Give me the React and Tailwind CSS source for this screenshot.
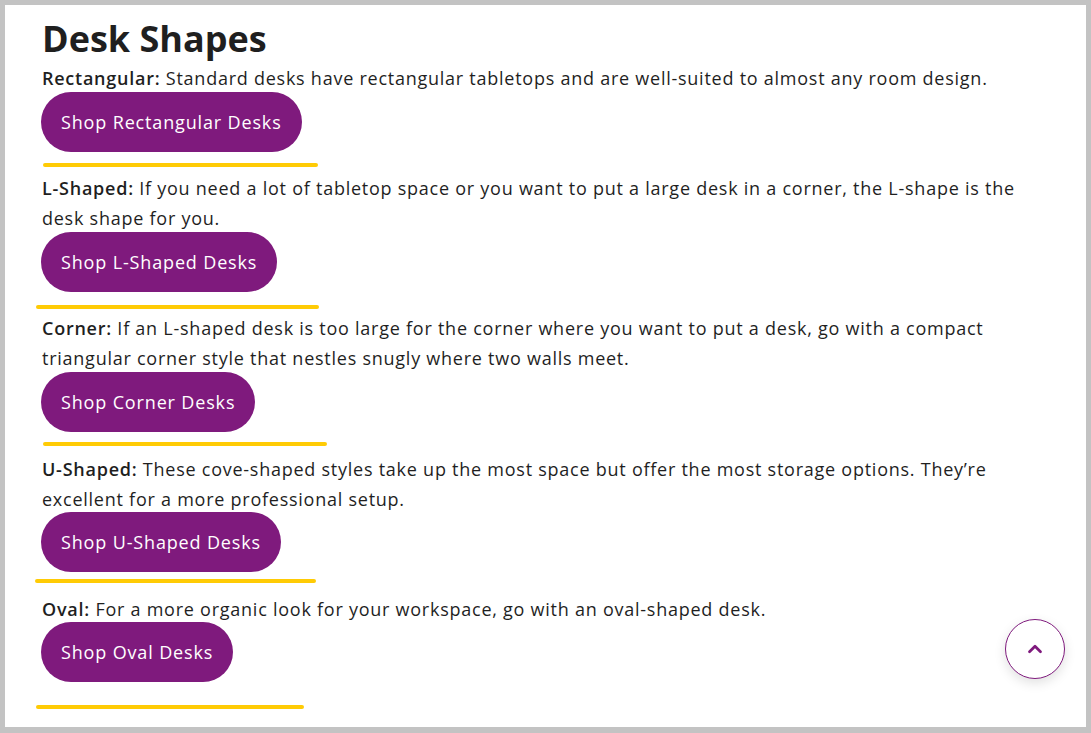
import { ChevronUp } from 'lucide-react'

// Desk shape sections, with the little offsets the yellow rules have in the page
const shapes = [
  {
    label: 'Rectangular:',
    lines: ['Standard desks have rectangular tabletops and are well-suited to almost any room design.'],
    cta: 'Shop Rectangular Desks',
    btn: 'mt-[-1px]',
    rule: 'ml-[1px] w-[275px] mt-[11px] mb-[6px]',
  },
  {
    label: 'L-Shaped:',
    lines: ['If you need a lot of tabletop space or you want to put a large desk in a corner, the L-shape is the', 'desk shape for you.'],
    cta: 'Shop L-Shaped Desks',
    btn: 'mt-[-1px]',
    rule: '-ml-[6px] w-[283px] mt-[13px] mb-[4px]',
  },
  {
    label: 'Corner:',
    lines: ['If an L-shaped desk is too large for the corner where you want to put a desk, go with a compact', 'triangular corner style that nestles snugly where two walls meet.'],
    cta: 'Shop Corner Desks',
    btn: 'mt-[-1px]',
    rule: 'ml-[1px] w-[284px] mt-[10px] mb-[8px]',
  },
  {
    label: 'U-Shaped:',
    lines: ['These cove-shaped styles take up the most space but offer the most storage options. They\u2019re', 'excellent for a more professional setup.'],
    cta: 'Shop U-Shaped Desks',
    btn: 'mt-[-2px]',
    rule: '-ml-[7px] w-[281px] mt-[7px] mb-[11px]',
  },
  {
    label: 'Oval:',
    lines: ['For a more organic look for your workspace, go with an oval-shaped desk.'],
    cta: 'Shop Oval Desks',
    btn: 'mt-[-2px]',
    rule: '-ml-[6px] w-[268px] mt-[23px] mb-0',
  },
]

function ShapeBlock({ shape }) {
  return (
    <div>
      <p className="text-[18px] leading-[30px] tracking-[0.75px] text-[#1f1f1f] whitespace-nowrap">
        <strong className="font-semibold">{shape.label}</strong>{' '}
        {shape.lines.map((line, i) => (
          <span key={i}>
            {i > 0 && <br />}
            {line}
          </span>
        ))}
      </p>
      <a
        href="#"
        className={`flex w-fit items-center h-[60px] px-[20px] rounded-full bg-[#7f1a7d] text-white text-[18px] tracking-[0.85px] -ml-[1px] ${shape.btn}`}
      >
        {shape.cta}
      </a>
      <div className={`h-[4px] rounded-full bg-[#ffcb05] ${shape.rule}`} />
    </div>
  )
}

export default function App() {
  return (
    <div className="w-[1091px] h-[733px] bg-[#c3c3c3] p-[5px] pr-[5px] pb-[6px]" style={{ fontFamily: '"Open Sans", Lato, sans-serif' }}>
      <div className="relative h-full bg-white px-[37px] pt-[10px] overflow-hidden">
        <h2 className="text-[36px] leading-[48px] font-bold text-[#1f1f1f]">Desk Shapes</h2>
        {shapes.map((shape) => (
          <ShapeBlock key={shape.cta} shape={shape} />
        ))}

        {/* Scroll to top */}
        <button className="absolute left-[1000px] top-[614px] w-[60px] h-[60px] rounded-full bg-white border border-[#7f1a7d] flex items-center justify-center shadow-[0_4px_12px_rgba(0,0,0,0.12)]">
          <ChevronUp className="w-[22px] h-[22px] text-[#7f1a7d]" strokeWidth={3} />
        </button>
      </div>
    </div>
  )
}
